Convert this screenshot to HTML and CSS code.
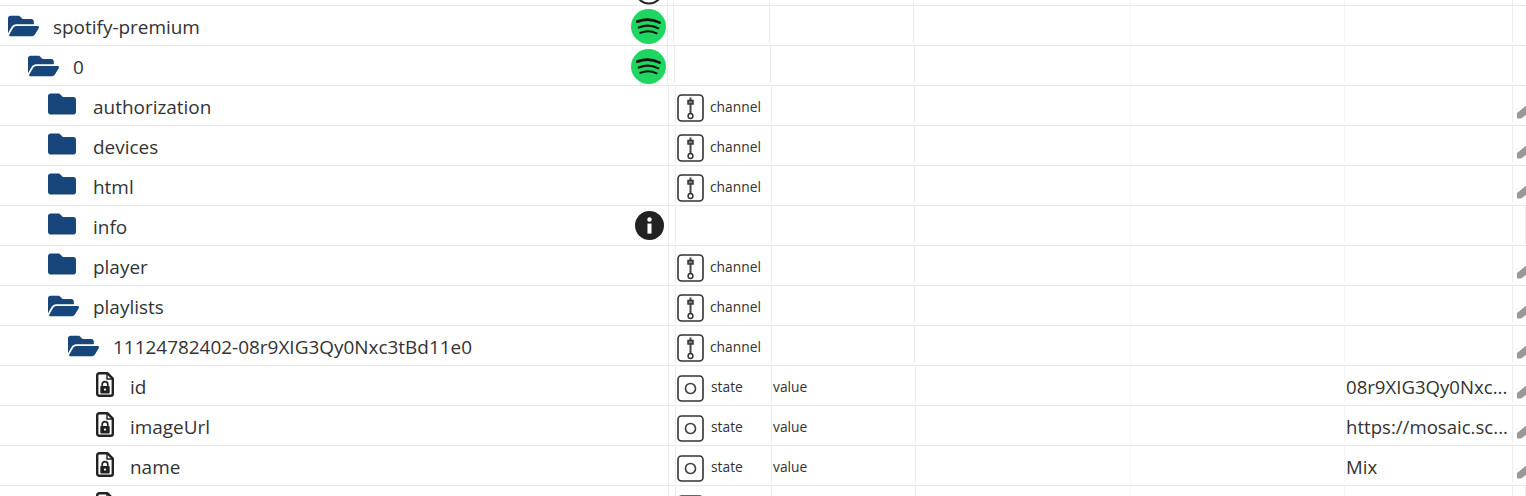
FILE: index.html
```
<!DOCTYPE html>
<html lang="en">
<head>
<meta charset="utf-8">
<title>Objects</title>
<link rel="stylesheet" href="styles.css">
</head>
<body>
<svg class="defs" width="0" height="0" aria-hidden="true">
  <symbol id="i-open" viewBox="0 0 576 512"><path d="M572.694 292.093L500.27 416.248A63.997 63.997 0 0 1 444.989 448H45.025c-18.523 0-30.064-20.093-20.731-36.093l72.424-124.155A64 64 0 0 1 152 256h399.964c18.523 0 30.064 20.093 20.73 36.093zM152 224h328v-48c0-26.51-21.49-48-48-48H272l-64-64H48C21.49 64 0 85.49 0 112v278.046l69.077-118.418C86.214 242.25 117.989 224 152 224z"/></symbol>
  <symbol id="i-folder" viewBox="0 0 512 512"><path d="M464 128H272l-64-64H48C21.49 64 0 85.49 0 112v288c0 26.51 21.49 48 48 48h416c26.51 0 48-21.49 48-48V176c0-26.51-21.49-48-48-48z"/></symbol>
  <symbol id="i-file" viewBox="0 0 18 25">
    <path d="M3.5 1.2h7.8l5.5 5.5V21.8a2 2 0 0 1-2 2H3.2a2 2 0 0 1-2-2V3.5a2.3 2.3 0 0 1 2.3-2.3z" fill="#fff" stroke="#222" stroke-width="2.4" stroke-linejoin="round"/>
    <path d="M11 1v6h6" fill="none" stroke="#222" stroke-width="1.4"/>
    <path d="M6.2 14.5v-2a2.8 2.8 0 0 1 5.6 0v2" fill="none" stroke="#222" stroke-width="1.7"/>
    <rect x="4.3" y="14" width="9.4" height="7.4" rx="1" fill="#222"/>
    <circle cx="9" cy="17.6" r="1.1" fill="#fff"/>
  </symbol>
  <symbol id="i-channel" viewBox="0 0 27 28">
    <rect x="1" y="1" width="25" height="26" rx="3.5" fill="#fff" stroke="#333" stroke-width="1.6"/>
    <path d="M13.5 3.5v18" stroke="#444" stroke-width="2"/>
    <rect x="11" y="6.5" width="5" height="3.5" fill="#888" stroke="#333" stroke-width="1.5"/>
    <circle cx="13.5" cy="22" r="2.4" fill="#fff" stroke="#333" stroke-width="1.5"/>
  </symbol>
  <symbol id="i-state" viewBox="0 0 27 27">
    <rect x="1" y="1" width="25" height="25" rx="3.5" fill="#fff" stroke="#333" stroke-width="1.6"/>
    <circle cx="13.5" cy="13.5" r="5" fill="none" stroke="#444" stroke-width="1.7"/>
  </symbol>
  <symbol id="i-spotify" viewBox="0 0 36 36">
    <circle cx="18" cy="18" r="18" fill="#1ed760"/>
    <path d="M6.5 13Q18 8.5 29.5 14" fill="none" stroke="#111" stroke-width="2.8" stroke-linecap="round"/>
    <path d="M8 19Q18 15 28 19.7" fill="none" stroke="#111" stroke-width="2.3" stroke-linecap="round"/>
    <path d="M9.5 24.5Q18 21 26.5 25" fill="none" stroke="#111" stroke-width="1.9" stroke-linecap="round"/>
  </symbol>
  <symbol id="i-info" viewBox="0 0 30 30">
    <circle cx="15" cy="15" r="15" fill="#222"/>
    <circle cx="15" cy="8.8" r="2.3" fill="#fff"/>
    <rect x="12.9" y="13" width="4.2" height="10.4" fill="#fff"/>
  </symbol>
  <symbol id="i-ring" viewBox="0 0 30 30">
    <circle cx="15" cy="15" r="13.5" fill="#fff" stroke="#222" stroke-width="2"/>
  </symbol>
  <symbol id="i-pencil" viewBox="0 0 16 16">
    <path d="M0 14.5V9L10 1 L12 9 L4 14.5z"/>
  </symbol>
</svg>

<main class="table">
  <div class="row row-top cols-a">
    <div class="cell tree"><svg class="badge ring"><use href="#i-ring"/></svg></div>
    <div class="cell"></div><div class="cell"></div><div class="cell"></div><div class="cell"></div><div class="cell"></div><div class="cell"></div>
  </div>

  <div class="row cols-a">
    <div class="cell tree l0"><svg class="ico open"><use href="#i-open"/></svg><span class="name">spotify-premium</span><svg class="badge spotify"><use href="#i-spotify"/></svg></div>
    <div class="cell"></div><div class="cell"></div><div class="cell"></div><div class="cell"></div><div class="cell"></div><div class="cell"></div>
  </div>

  <div class="row cols-b">
    <div class="cell tree l1"><svg class="ico open"><use href="#i-open"/></svg><span class="name">0</span><svg class="badge spotify"><use href="#i-spotify"/></svg></div>
    <div class="cell"></div><div class="cell"></div><div class="cell"></div><div class="cell"></div><div class="cell"></div><div class="cell"></div>
  </div>

  <div class="row cols-c">
    <div class="cell tree l2"><svg class="ico folder"><use href="#i-folder"/></svg><span class="name">authorization</span></div>
    <div class="cell"></div>
    <div class="cell type"><svg class="kind"><use href="#i-channel"/></svg><span>channel</span></div>
    <div class="cell"></div><div class="cell"></div><div class="cell"></div><div class="cell"></div>
    <div class="cell edit"><svg class="pencil"><use href="#i-pencil"/></svg></div>
  </div>

  <div class="row cols-c">
    <div class="cell tree l2"><svg class="ico folder"><use href="#i-folder"/></svg><span class="name">devices</span></div>
    <div class="cell"></div>
    <div class="cell type"><svg class="kind"><use href="#i-channel"/></svg><span>channel</span></div>
    <div class="cell"></div><div class="cell"></div><div class="cell"></div><div class="cell"></div>
    <div class="cell edit"><svg class="pencil"><use href="#i-pencil"/></svg></div>
  </div>

  <div class="row cols-c">
    <div class="cell tree l2"><svg class="ico folder"><use href="#i-folder"/></svg><span class="name">html</span></div>
    <div class="cell"></div>
    <div class="cell type"><svg class="kind"><use href="#i-channel"/></svg><span>channel</span></div>
    <div class="cell"></div><div class="cell"></div><div class="cell"></div><div class="cell"></div>
    <div class="cell edit"><svg class="pencil"><use href="#i-pencil"/></svg></div>
  </div>

  <div class="row cols-c">
    <div class="cell tree l2"><svg class="ico folder"><use href="#i-folder"/></svg><span class="name">info</span><svg class="badge info"><use href="#i-info"/></svg></div>
    <div class="cell"></div><div class="cell"></div><div class="cell"></div><div class="cell"></div><div class="cell"></div><div class="cell"></div><div class="cell"></div>
  </div>

  <div class="row cols-c">
    <div class="cell tree l2"><svg class="ico folder"><use href="#i-folder"/></svg><span class="name">player</span></div>
    <div class="cell"></div>
    <div class="cell type"><svg class="kind"><use href="#i-channel"/></svg><span>channel</span></div>
    <div class="cell"></div><div class="cell"></div><div class="cell"></div><div class="cell"></div>
    <div class="cell edit"><svg class="pencil"><use href="#i-pencil"/></svg></div>
  </div>

  <div class="row cols-c">
    <div class="cell tree l2"><svg class="ico open"><use href="#i-open"/></svg><span class="name">playlists</span></div>
    <div class="cell"></div>
    <div class="cell type"><svg class="kind"><use href="#i-channel"/></svg><span>channel</span></div>
    <div class="cell"></div><div class="cell"></div><div class="cell"></div><div class="cell"></div>
    <div class="cell edit"><svg class="pencil"><use href="#i-pencil"/></svg></div>
  </div>

  <div class="row cols-c">
    <div class="cell tree l3"><svg class="ico open"><use href="#i-open"/></svg><span class="name">11124782402-08r9XIG3Qy0Nxc3tBd11e0</span></div>
    <div class="cell"></div>
    <div class="cell type"><svg class="kind"><use href="#i-channel"/></svg><span>channel</span></div>
    <div class="cell"></div><div class="cell"></div><div class="cell"></div><div class="cell"></div>
    <div class="cell edit"><svg class="pencil"><use href="#i-pencil"/></svg></div>
  </div>

  <div class="row cols-d">
    <div class="cell tree l4"><svg class="ico file"><use href="#i-file"/></svg><span class="name">id</span></div>
    <div class="cell"></div>
    <div class="cell type"><svg class="kind st"><use href="#i-state"/></svg><span>state</span></div>
    <div class="cell role">value</div>
    <div class="cell"></div><div class="cell"></div>
    <div class="cell val">08r9XIG3Qy0Nxc...</div>
    <div class="cell edit"><svg class="pencil"><use href="#i-pencil"/></svg></div>
  </div>

  <div class="row cols-d">
    <div class="cell tree l4"><svg class="ico file"><use href="#i-file"/></svg><span class="name">imageUrl</span></div>
    <div class="cell"></div>
    <div class="cell type"><svg class="kind st"><use href="#i-state"/></svg><span>state</span></div>
    <div class="cell role">value</div>
    <div class="cell"></div><div class="cell"></div>
    <div class="cell val">https://mosaic.sc...</div>
    <div class="cell edit"><svg class="pencil"><use href="#i-pencil"/></svg></div>
  </div>

  <div class="row cols-d">
    <div class="cell tree l4"><svg class="ico file"><use href="#i-file"/></svg><span class="name">name</span></div>
    <div class="cell"></div>
    <div class="cell type"><svg class="kind st"><use href="#i-state"/></svg><span>state</span></div>
    <div class="cell role">value</div>
    <div class="cell"></div><div class="cell"></div>
    <div class="cell val">Mix</div>
    <div class="cell edit"><svg class="pencil"><use href="#i-pencil"/></svg></div>
  </div>

  <div class="row cols-d">
    <div class="cell tree l4"><svg class="ico file"><use href="#i-file"/></svg></div>
    <div class="cell"></div>
    <div class="cell type"><svg class="kind st"><use href="#i-state"/></svg></div>
    <div class="cell"></div><div class="cell"></div><div class="cell"></div><div class="cell"></div><div class="cell"></div>
  </div>
</main>
</body>
</html>
```

FILE: styles.css
```
html, body {
  margin: 0;
  height: 496px;
  overflow: hidden;
  background: #fff;
}

.defs {
  position: absolute;
}

.table {
  font-family: "Open Sans", "Noto Sans", sans-serif;
  color: #333;
}

.row {
  display: grid;
  height: 40px;
  box-sizing: border-box;
  border-bottom: 1px solid #e8e8e8;
  width: 1526px;
}

.cols-a { grid-template-columns: 668px 6px 96px 144px 217px 214px 168px 13px; }
.cols-b { grid-template-columns: 668px 7px 96px 144px 216px 214px 168px 13px; }
.cols-c { grid-template-columns: 669px 7px 96px 143px 216px 214px 168px 13px; }
.cols-d { grid-template-columns: 669px 7px 96px 144px 215px 214px 168px 13px; }

.row-top {
  height: 6px;
  overflow: hidden;
}

.cell {
  height: 37px;
  min-width: 0;
  display: flex;
  align-items: center;
  box-sizing: border-box;
  border-right: 1px solid #ececec;
  overflow: hidden;
}

.cell:nth-child(5),
.cell:nth-child(6) {
  border-right-color: #f5f5f5;
}

.row-top .cell {
  height: 5px;
}

.tree {
  font-size: 18.95px;
  height: 39px;
  overflow: visible;
}

.l0 { padding-left: 8px; }
.l1 { padding-left: 28px; }
.l2 { padding-left: 48px; }
.l3 { padding-left: 68px; }
.l4 { padding-left: 96px; }

.ico {
  flex: none;
  fill: #18457a;
}

.open {
  width: 31px;
  height: 28px;
  margin-right: 14px;
}

.folder {
  width: 28px;
  height: 28px;
  margin-right: 17px;
  margin-top: -3px;
}

.file {
  width: 18px;
  height: 25px;
  margin-right: 16px;
  margin-top: -3px;
}

.name {
  white-space: nowrap;
  position: relative;
  top: 1px;
}

.badge {
  flex: none;
  margin-left: auto;
}

.spotify {
  width: 35px;
  height: 35px;
  margin-top: 2px;
  margin-right: 1px;
}

.info {
  width: 29px;
  height: 29px;
  margin-right: 4px;
}

.ring {
  width: 30px;
  height: 30px;
  margin-right: 3px;
  margin-top: -25px;
}

.type {
  font-size: 13.8px;
  white-space: nowrap;
  overflow: visible;
  padding: 4px 0 0 1px;
}

.kind {
  flex: none;
  width: 27px;
  height: 28px;
  margin-top: 2px;
  margin-right: 6px;
}

.kind.st {
  height: 27px;
  margin-top: 3px;
  margin-right: 7px;
}

.role {
  font-size: 13.8px;
  padding: 4px 0 0 1px;
}

.val {
  display: block;
  font-size: 18.6px;
  line-height: 37px;
  padding: 2px 0 0 1px;
  white-space: nowrap;
}

.edit {
  border-right: 0;
  align-items: flex-start;
}

.pencil {
  flex: none;
  width: 16px;
  height: 16px;
  margin: 18px 0 0 4px;
  fill: #999;
}
```
